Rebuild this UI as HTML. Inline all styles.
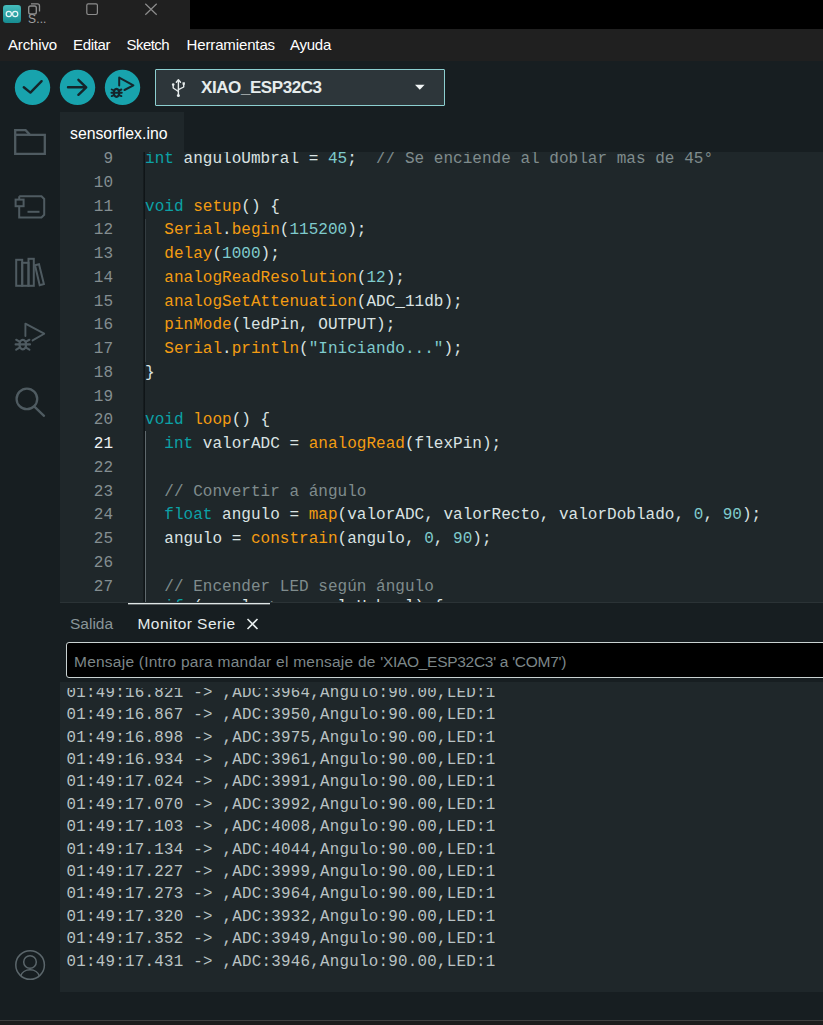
<!DOCTYPE html>
<html lang="es">
<head>
<meta charset="utf-8">
<title>sensorflex | Arduino IDE</title>
<style>
html,body{margin:0;padding:0}
body{width:823px;height:1025px;position:relative;overflow:hidden;background:#171e21;font-family:"Liberation Sans",sans-serif;color:#dae3e3}
.abs{position:absolute}
#title{left:0;top:0;width:823px;height:29px;background:#000}
#title .left{left:0;top:0;width:190px;height:29px;background:#202020}
#menu{left:0;top:29px;width:823px;height:32px;background:#202020}
#menu span{position:absolute;top:7px;font-size:15px;line-height:18px;color:#fff;white-space:nowrap}
#toolbar{left:0;top:62px;width:823px;height:50px;background:#171e21}
.cbtn{position:absolute;top:8px;width:36px;height:36px;border-radius:50%;background:#119fa5}
#board{left:155px;top:7px;width:288px;height:35px;border:1px solid #8ccfd0;background:#2d363a;border-radius:1px}
#board .name{left:45px;top:8px;font-weight:bold;font-size:17px;line-height:20px;color:#e6ecec;white-space:nowrap;letter-spacing:-0.42px}
#side{left:0;top:112px;width:60px;height:908px;background:#171e21}
#tabbar{left:60px;top:112px;width:763px;height:40px;background:#171e21}
#tab{left:0;top:0;width:124px;height:40px;background:#1f272a}
#tab span{position:absolute;left:10px;top:12.5px;font-size:15.8px;line-height:18px;color:#fff;white-space:nowrap}
#editor{left:60px;top:152px;width:763px;height:450px;background:#1f272a;overflow:hidden}
#gutter,#code{font-family:"Liberation Mono",monospace;font-size:16px;line-height:23.75px;white-space:pre}
#gutter{left:0;top:-4px;width:53px;text-align:right;color:#848e91}
#gutter .act{color:#eef2f2}
#code{left:85px;top:-4px;color:#dae3e3;letter-spacing:0.025px}
.k{color:#0ca1a6}.f{color:#f39c12}.n{color:#7fcbcd}.c{color:#7f8c8d}
#vline{left:83px;top:0;width:2px;height:450px;background:linear-gradient(90deg,#181f22,#0d1214)}
#panel{left:60px;top:602px;width:763px;height:418px;background:#171e21;box-shadow:inset 0 1px 0 #2b3336}
#ptabs span{position:absolute;top:13px;font-size:15.5px;line-height:18px;white-space:nowrap}
#input{left:6px;top:40px;width:770px;height:34px;border:1px solid #c9d2d2;background:#000;border-radius:3px}
#input span{position:absolute;left:7px;top:9.500px;font-size:15.5px;line-height:18px;color:#7d8789;white-space:nowrap;letter-spacing:0.07px}
#out{left:0;top:80px;width:763px;height:310px;background:#1f272a}
#outc{left:0;top:6px;width:763px;height:304px;overflow:hidden}
#outt{left:6.500px;top:-6.300px;font-family:"Liberation Mono",monospace;font-size:15.800px;letter-spacing:0.270px;line-height:22.400px;white-space:pre;color:#b9c2c3}
#status{left:0;top:1020px;width:823px;height:5px;background:#1c1c1c;border-top:1px solid #3f3f3f;box-sizing:border-box}
</style>
</head>
<body>
<div id="title" class="abs"><div class="left abs"></div>
<span class="abs" style="left:28px;top:13px;font-size:12px;line-height:12px;color:#a2a2a2;letter-spacing:0.15px">S...</span>
<svg class="abs" style="left:0;top:0" width="190" height="29" viewBox="0 0 190 29">
<defs><linearGradient id="ag" x1="0" y1="0" x2="0" y2="1"><stop offset="0" stop-color="#46bcbc"/><stop offset="1" stop-color="#178c91"/></linearGradient></defs>
<rect x="3" y="5" width="18" height="18" rx="3.200" fill="url(#ag)"/>
<circle cx="8.800" cy="14" r="2.600" fill="none" stroke="#e8f6f6" stroke-width="1.200"/>
<circle cx="15.200" cy="14" r="2.600" fill="none" stroke="#e8f6f6" stroke-width="1.200"/>
<path d="M31 3.900H37.400a2.100 2.100 0 0 1 2.100 2.100V11.600" fill="none" stroke="#8c8c8c" stroke-width="1.300"/>
<rect x="28.700" y="6" width="7.600" height="8" rx="1.800" fill="#1c1c1c" stroke="#8c8c8c" stroke-width="1.400"/>
<rect x="86.800" y="3.900" width="10.600" height="10.600" rx="1.400" fill="none" stroke="#8c8c8c" stroke-width="1.200"/>
<path d="M145.300 3.700L156.700 14.700M156.700 3.700L145.300 14.700" stroke="#8c8c8c" stroke-width="1.200" fill="none"/>
</svg>
</div>
<div id="menu" class="abs"><span style="left:8px;letter-spacing:-0.150px">Archivo</span><span style="left:73px;letter-spacing:-0.320px">Editar</span><span style="left:126.500px;letter-spacing:-0.550px">Sketch</span><span style="left:186.500px;letter-spacing:-0.130px">Herramientas</span><span style="left:290px;letter-spacing:-0.250px">Ayuda</span></div>
<div id="toolbar" class="abs">
<svg class="abs" style="left:0;top:0" width="160" height="50" viewBox="0 62 160 50">
<circle cx="32.500" cy="87.400" r="17.700" fill="#18a3ad"/>
<circle cx="77.500" cy="87.400" r="17.700" fill="#18a3ad"/>
<circle cx="122.500" cy="87.400" r="17.700" fill="#18a3ad"/>
<path d="M23.800 87.300L30.400 92.600L41.600 81.200" fill="none" stroke="#15252b" stroke-width="2.400" stroke-linecap="round" stroke-linejoin="round"/>
<path d="M68 87.300H86M78.400 79.800L86.200 87.300L78.400 94.800" fill="none" stroke="#15252b" stroke-width="2.400" stroke-linecap="round" stroke-linejoin="round"/>
<path d="M119.200 85.600V77.600L133.400 85.300L124.500 90" fill="none" stroke="#15252b" stroke-width="2" stroke-linecap="round" stroke-linejoin="round"/>
<ellipse cx="116.500" cy="92.800" rx="2.700" ry="4" fill="none" stroke="#15252b" stroke-width="2.200"/>
<path d="M113.600 92.700H119.400M111.400 92.700H113.600M119.400 92.700H121.800M111.700 89.500L114 90.500M121.400 89.500L119 90.500M111.700 96.100L114 95.100M121.400 96.100L119 95.100" fill="none" stroke="#15252b" stroke-width="1.900" stroke-linecap="round"/>
</svg>
<div id="board" class="abs"><span class="name abs">XIAO_ESP32C3</span>
<svg class="abs" style="left:0;top:0" width="288" height="35" viewBox="156 70 288 35">
<g fill="none" stroke="#e6ecec" stroke-width="1.400" stroke-linecap="round" stroke-linejoin="round">
<path d="M178.400 81V94.500"/>
<path d="M176.300 82.300L178.400 79.700L180.500 82.300"/>
<path d="M173.200 85.200V88L178.400 91.500"/>
<path d="M183.700 84.200V87L178.400 89.700"/>
</g>
<circle cx="173.200" cy="84.600" r="1.300" fill="#e6ecec"/>
<rect x="182.500" y="82.300" width="2.400" height="2.400" fill="#e6ecec"/>
<circle cx="178.400" cy="95.400" r="1.500" fill="#e6ecec"/>
<path d="M415 84.800H424.600L419.800 89.800Z" fill="#f2f6f6"/>
</svg>
</div>
</div>
<div id="side" class="abs">
<svg class="abs" style="left:0;top:0" width="60" height="908" viewBox="0 112 60 908" fill="none" stroke="#4f5b61" stroke-width="2.300" stroke-linejoin="miter">
<path d="M15.200 130.200H25.600L30 134.800H44.800V153.900H15.200Z"/>
<path d="M15.200 134.800H30"/>
<path d="M19.200 196.300H41.500L44.200 199V214.800L41.500 217.500H19.200V206.500M19.200 199.200V196.300" stroke-width="2"/>
<rect x="15.600" y="199.600" width="8" height="6.600" stroke-width="2"/>
<path d="M27.500 211.800H39.500" stroke-width="2"/>
<g stroke-width="2">
<rect x="16.200" y="259.800" width="6" height="26"/>
<rect x="22.200" y="262.800" width="6.300" height="23"/>
<rect x="28.500" y="258.800" width="5.300" height="27"/>
<path d="M35 265.300L39 264.200L43.900 284L39.700 285.200Z"/>
</g>
<g stroke-width="1.900" stroke-linecap="round" stroke-linejoin="round">
<path d="M25.400 336V323.600L44.200 333.700L32.600 340.400"/>
<ellipse cx="22.800" cy="344.600" rx="3.300" ry="4.700" stroke-width="2.300"/>
<path d="M19.300 344.400H26.300M15.600 344.400H19.300M26.300 344.400H30M16.200 339.800L19.600 341.600M29.400 339.800L26 341.600M16.200 349.600L19.600 347.600M29.400 349.600L26 347.600" stroke-width="2.100"/>
</g>
<circle cx="26.900" cy="398.900" r="10.300" stroke-width="2.300"/>
<path d="M34.400 406.600L44 415.800" stroke-width="2.300" stroke-linecap="round"/>
<g stroke="#5b666b" stroke-width="1.500">
<circle cx="30.100" cy="965" r="14.300"/>
<circle cx="30" cy="962" r="6.300"/>
<path d="M20.700 976A9.500 7.700 0 0 1 39.300 976"/>
</g>
</svg>
</div>
<div id="tabbar" class="abs"><div id="tab" class="abs"><span>sensorflex.ino</span></div></div>
<div id="editor" class="abs">
<div id="gutter" class="abs">9
10
11
12
13
14
15
16
17
18
19
20
<span class="act">21</span>
22
23
24
25
26
27
28</div>
<div id="vline" class="abs"></div><div class="abs" style="left:85px;top:67px;width:1px;height:143px;background:#343d41"></div><div class="abs" style="left:85px;top:279px;width:1px;height:171px;background:#5f696d"></div>
<div id="code" class="abs"><span class="k">int</span> anguloUmbral = <span class="n">45</span>;  <span class="c">// Se enciende al doblar mas de 45°</span>

<span class="k">void</span> <span class="f">setup</span>() {
  <span class="f">Serial</span>.<span class="f">begin</span>(<span class="n">115200</span>);
  <span class="f">delay</span>(<span class="n">1000</span>);
  <span class="f">analogReadResolution</span>(<span class="n">12</span>);
  <span class="f">analogSetAttenuation</span>(ADC_11db);
  <span class="f">pinMode</span>(ledPin, OUTPUT);
  <span class="f">Serial</span>.<span class="f">println</span>(<span class="n">"Iniciando..."</span>);
}

<span class="k">void</span> <span class="f">loop</span>() {
  <span class="k">int</span> valorADC = <span class="f">analogRead</span>(flexPin);

  <span class="c">// Convertir a ángulo</span>
  <span class="k">float</span> angulo = <span class="f">map</span>(valorADC, valorRecto, valorDoblado, <span class="n">0</span>, <span class="n">90</span>);
  angulo = <span class="f">constrain</span>(angulo, <span class="n">0</span>, <span class="n">90</span>);

  <span class="c">// Encender LED según ángulo</span>
<span style="position:relative;top:-3px">  <span class="k">if</span> (angulo &gt;= anguloUmbral) {</span></div>
</div>
<div id="panel" class="abs">
<div class="abs" style="left:68px;top:1px;width:142px;height:1px;background:#dfe6e6;box-shadow:0 1px 0 rgba(223,230,230,0.350)"></div><svg class="abs" style="left:186px;top:15px" width="14" height="14" viewBox="0 0 14 14"><path d="M1.500 2L11.500 12M11.500 2L1.500 12" stroke="#e6ecec" stroke-width="1.600" fill="none"/></svg><div id="ptabs"><span style="left:10px;color:#8a9599">Salida</span><span style="left:77.500px;color:#e6ecec;letter-spacing:0.450px">Monitor Serie</span></div>
<div id="input" class="abs"><span><i style="font-style:normal;letter-spacing:0.240px">Mensaje (Intro para mandar el mensaje de </i><i style="font-style:normal;letter-spacing:-0.290px">'XIAO_ESP32C3' a 'COM7')</i></span></div>
<div id="out" class="abs"><div id="outc" class="abs"><div id="outt" class="abs">01:49:16.821 -&gt; ,ADC:3964,Angulo:90.00,LED:1
01:49:16.867 -&gt; ,ADC:3950,Angulo:90.00,LED:1
01:49:16.898 -&gt; ,ADC:3975,Angulo:90.00,LED:1
01:49:16.934 -&gt; ,ADC:3961,Angulo:90.00,LED:1
01:49:17.024 -&gt; ,ADC:3991,Angulo:90.00,LED:1
01:49:17.070 -&gt; ,ADC:3992,Angulo:90.00,LED:1
01:49:17.103 -&gt; ,ADC:4008,Angulo:90.00,LED:1
01:49:17.134 -&gt; ,ADC:4044,Angulo:90.00,LED:1
01:49:17.227 -&gt; ,ADC:3999,Angulo:90.00,LED:1
01:49:17.273 -&gt; ,ADC:3964,Angulo:90.00,LED:1
01:49:17.320 -&gt; ,ADC:3932,Angulo:90.00,LED:1
01:49:17.352 -&gt; ,ADC:3949,Angulo:90.00,LED:1
01:49:17.431 -&gt; ,ADC:3946,Angulo:90.00,LED:1</div></div></div>
</div>
<div id="status" class="abs"></div>
</body>
</html>
